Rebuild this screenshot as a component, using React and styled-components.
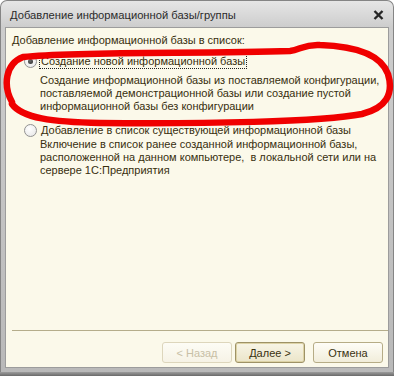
import React from 'react';
import styled, { createGlobalStyle } from 'styled-components';

const GlobalStyle = createGlobalStyle`
  html, body {
    margin: 0;
    padding: 0;
    background: #ffffff;
  }
  body {
    width: 394px;
    height: 376px;
    overflow: hidden;
    font-family: "Liberation Sans", Arial, sans-serif;
  }
`;

// Окно целиком, поверх него рисуем красную пометку
const Screen = styled.div`
  position: relative;
  width: 394px;
  height: 376px;
  display: flex;
  flex-direction: column;
  background: #ffffff;
`;

const Window = styled.div`
  height: 372px;
  box-sizing: border-box;
  display: flex;
  flex-direction: column;
  border: 1px solid #858585;
  border-bottom: none;
  border-radius: 7px 7px 0 0;
  background: linear-gradient(#e6e6e6, #cdcdcd 26px, #c2c2c2 60%, #b9b9b9);
  padding: 0 4px 4px 4px;
`;

const DesktopStrip = styled.div`
  height: 4px;
  background: linear-gradient(#9c9c9c, #6a6a6a);
`;

const TitleBar = styled.div`
  height: 26px;
  display: flex;
  align-items: center;
  justify-content: space-between;
  padding: 1px 5px 0 5px;
  box-sizing: border-box;
`;

const Title = styled.span`
  font-size: 11.2px;
  color: #2b2b2b;
`;

const CloseIcon = styled.svg`
  width: 11px;
  height: 10px;
  display: block;
`;

const Client = styled.div`
  flex: 1;
  display: flex;
  flex-direction: column;
  background: #fbf9ea;
  border: 1px solid #9c9c9c;
`;

const Body = styled.div`
  flex: 1;
  padding: 6px 6px 0 6px;
  color: #382f0e;
  font-size: 11px;
  line-height: 13px;
`;

const Heading = styled.div`
  margin-bottom: 7px;
`;

const Option = styled.div`
  margin-left: 12px;
  margin-bottom: ${p => p.gap || 0}px;
`;

const OptionRow = styled.div`
  display: flex;
  align-items: center;
  height: 14px;
  gap: 2px;
`;

const Radio = styled.span`
  width: 13px;
  height: 13px;
  box-sizing: border-box;
  border-radius: 50%;
  border: 1px solid #929292;
  background: radial-gradient(circle at 40% 35%, #ffffff, #e4e4e4);
  display: flex;
  align-items: center;
  justify-content: center;
  flex-shrink: 0;

  &::after {
    content: '';
    display: ${p => (p.checked ? 'block' : 'none')};
    width: 5px;
    height: 5px;
    border-radius: 50%;
    background: radial-gradient(circle at 40% 35%, #6a6a6a, #2a2a2a);
  }
`;

const Label = styled.span`
  padding: 0 1px;
  border: 1px dotted ${p => (p.focused ? '#222' : 'transparent')};
  line-height: 13px;
`;

const Description = styled.div`
  margin-left: 16px;
  margin-top: ${p => p.offset || 0}px;
  white-space: pre;
`;

const Footer = styled.div`
  display: flex;
  flex-direction: column;
`;

const Separator = styled.div`
  height: 1px;
  margin-left: 6px;
  background: #b5ad8b;
`;

const ButtonRow = styled.div`
  display: flex;
  justify-content: flex-end;
  padding: 11px 5px 4px 0;
`;

const Button = styled.button`
  width: 70px;
  height: 21px;
  margin-left: ${p => p.space || 0}px;
  padding: 0;
  box-sizing: border-box;
  font-family: "Liberation Sans", Arial, sans-serif;
  font-size: 11px;
  border-radius: 3px;
  color: #3a3110;
  border: 1px solid #b6ac86;
  background: linear-gradient(#fefdf7, #f1edda);

  &:disabled {
    color: #c8c0a6;
    border-color: #ddd6bc;
    background: linear-gradient(#fdfcf5, #f6f3e6);
  }

  ${p =>
    p.primary &&
    `
    border-color: #9e9266;
    box-shadow: inset 0 0 0 1px #ddd3a6;
    background: linear-gradient(#f8f5e6, #ebe5c9);
  `}
`;

const Marker = styled.svg`
  position: absolute;
  left: 0;
  top: 0;
  width: 394px;
  height: 376px;
  pointer-events: none;
`;

const options = [
  {
    label: 'Создание новой информационной базы',
    checked: true,
    text: [
      'Создание информационной базы из поставляемой конфигурации,',
      'поставляемой демонстрационной базы или создание пустой',
      'информационной базы без конфигурации',
    ],
    offset: 6,
    gap: 10,
  },
  {
    label: 'Добавление в список существующей информационной базы',
    checked: false,
    text: [
      'Включение в список ранее созданной информационной базы,',
      'расположенной на данном компьютере,  в локальной сети или на',
      'сервере 1С:Предприятия',
    ],
    offset: 1,
    gap: 0,
  },
];

const App = () => {
  return (
    <Screen>
      <GlobalStyle />
      <Window>
        <TitleBar>
          <Title>Добавление информационной базы/группы</Title>
          <CloseIcon viewBox="0 0 11 10">
            <path d="M1.5 1 L9.5 9 M9.5 1 L1.5 9" stroke="#262626" strokeWidth="2.4" />
          </CloseIcon>
        </TitleBar>
        <Client>
          <Body>
            <Heading>Добавление информационной базы в список:</Heading>
            {options.map((opt, i) => (
              <Option key={i} gap={opt.gap}>
                <OptionRow>
                  <Radio checked={opt.checked} />
                  <Label focused={opt.checked}>{opt.label}</Label>
                </OptionRow>
                <Description offset={opt.offset}>
                  {opt.text.map((line, j) => (
                    <div key={j}>{line}</div>
                  ))}
                </Description>
              </Option>
            ))}
          </Body>
          <Footer>
            <Separator />
            <ButtonRow>
              <Button disabled>&lt; Назад</Button>
              <Button primary space={3}>Далее &gt;</Button>
              <Button space={8}>Отмена</Button>
            </ButtonRow>
          </Footer>
        </Client>
      </Window>
      <DesktopStrip />
      <Marker viewBox="0 0 394 376">
        <path
          d="M12 102 C3 86 5 64 23 57 C80 51 200 54 290 51 C300 50 304 44 320 45 C350 46 380 52 388 74 C394 94 386 108 362 114 C322 122 200 124 100 123 C52 122 22 118 12 104"
          fill="none"
          stroke="#f00000"
          strokeWidth="6.5"
          strokeLinecap="round"
          strokeLinejoin="round"
        />
      </Marker>
    </Screen>
  );
};

export default App;
